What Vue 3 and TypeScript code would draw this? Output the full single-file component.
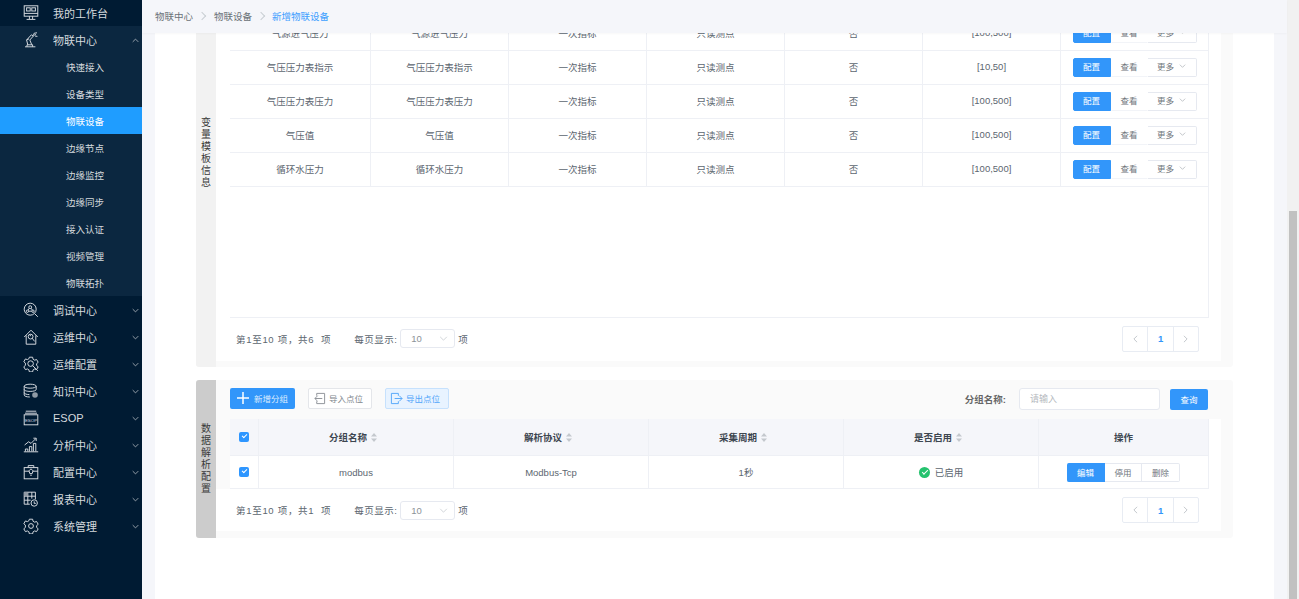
<script setup lang="ts">
const menuTop = ["快速接入", "设备类型", "物联设备", "边缘节点", "边缘监控", "边缘同步", "接入认证", "视频管理", "物联拓扑"];
const menuRest = [
  { name: "调试中心", icon: "debug" },
  { name: "运维中心", icon: "house" },
  { name: "运维配置", icon: "gearsearch" },
  { name: "知识中心", icon: "db" },
  { name: "ESOP", icon: "esop" },
  { name: "分析中心", icon: "chart" },
  { name: "配置中心", icon: "case" },
  { name: "报表中心", icon: "report" },
  { name: "系统管理", icon: "gear" },
];
const rows = [
  ["气源进气压力", "气源进气压力", "一次指标", "只读测点", "否", "[100,500]"],
  ["气压压力表指示", "气压压力表指示", "一次指标", "只读测点", "否", "[10,50]"],
  ["气压压力表压力", "气压压力表压力", "一次指标", "只读测点", "否", "[100,500]"],
  ["气压值", "气压值", "一次指标", "只读测点", "否", "[100,500]"],
  ["循环水压力", "循环水压力", "一次指标", "只读测点", "否", "[100,500]"],
];
const groupCols = ["分组名称", "解析协议", "采集周期", "是否启用"];
const varLabel = "变量模板信息".split("");
const dataLabel = "数据解析配置".split("");
const gearPath = "M8 1.500h4l.6 2.600 1.900 1.100 2.500-.8 2 3.500-2 1.700v2.200l2 1.700-2 3.500-2.500-.8-1.900 1.100-.6 2.600H8l-.6-2.600-1.900-1.100-2.500.8-2-3.500 2-1.700V8.900l-2-1.700 2-3.500 2.500.8 1.900-1.100z";
</script>

<template>
  <div class="page">
    <aside class="side">
      <div class="m-item home">
        <svg class="ico" viewBox="0 0 20 20"><rect x="1.500" y="1" width="17" height="13" /><rect x="4.500" y="3.500" width="4.500" height="4" /><rect x="11" y="3.500" width="4.500" height="4" /><path d="M1.500 10.500h17M8 14v3.500M12 14v3.500M4.500 18h11" /></svg>
        <span>我的工作台</span>
      </div>
      <div class="m-item open">
        <svg class="ico" viewBox="0 0 20 20"><path d="M2.500 18.500h13M5 18.500v-2.500h7v2.500M6 16L4.500 10l6-6.500 2.500 1.500-4.500 5 2.500 6M4.500 10l3-1.500M13 4.500l3-1.500M13 3.500l1-2 3.500-.5M15 5l3 .5" /></svg>
        <span>物联中心</span>
        <svg class="arrow" viewBox="0 0 10 6"><path d="M1 5l4-4 4 4" /></svg>
      </div>
      <div class="sub">
        <div v-for="(s, i) in menuTop" :key="s" class="s-item" :class="{ on: i === 2 }">{{ s }}</div>
      </div>
      <div v-for="m in menuRest" :key="m.name" class="m-item">
        <svg class="ico" viewBox="0 0 20 20">
          <template v-if="m.icon === 'debug'">
            <circle cx="9" cy="9" r="7.500" /><path d="M14.500 14.500l4 4" /><circle cx="9" cy="6.500" r="1.800" /><circle cx="5.500" cy="11.500" r="1.500" /><circle cx="12.500" cy="11.500" r="1.500" /><path d="M7.500 8l-1 2M10.500 8l1 2M7 11.500h4" />
          </template>
          <template v-else-if="m.icon === 'house'">
            <path d="M1.500 10L10 1.500l8.500 8.500M4 8v11h12V8" /><circle cx="9.500" cy="9.500" r="3" /><path d="M11.500 11.500l3 4M8.500 6.500l1 2.500" />
          </template>
          <template v-else-if="m.icon === 'gearsearch'">
            <path :d="gearPath" /><circle cx="9.500" cy="9.500" r="3.500" /><path d="M12 12l6.500 6.500" />
          </template>
          <template v-else-if="m.icon === 'db'">
            <ellipse cx="9" cy="4" rx="7.500" ry="2.500" /><path d="M1.500 4v11c0 1.500 3 2.500 7 2.500M1.500 8c0 1.500 3 2.500 7.500 2.500S16.500 9.500 16.500 8V4M1.500 12c0 1.500 3 2.500 6.500 2.500" /><circle class="fill" cx="15" cy="15" r="3.500" />
          </template>
          <template v-else-if="m.icon === 'esop'">
            <path d="M3.500 1.500h13M2.500 4h15" /><rect x="1.500" y="6" width="17" height="12.500" /><text x="10" y="14.500" class="ico-text">ESOP</text>
          </template>
          <template v-else-if="m.icon === 'chart'">
            <path d="M1 18.500h18M3 18v-3h3v3M8 18v-6h3v6M13 18V8h3v10M2 10l5-4 3 2 6-6M13 1.500h3.500V5" />
          </template>
          <template v-else-if="m.icon === 'case'">
            <rect x="1.500" y="4.500" width="17" height="14" /><path d="M6.500 4.500V2h7v2.500M1.500 9h6M12.500 9h6" /><path d="M10 6l2.500 2.500-1 3.500h-3l-1-3.500zM9 14h2" />
          </template>
          <template v-else-if="m.icon === 'report'">
            <path d="M1.500 1.500h14v9M1.500 1.500v15h7M1.500 6.500h14M1.500 11.500h8M6 1.500v15M11 1.500v8" /><rect class="fill" x="1.500" y="1.500" width="4.500" height="5" /><circle cx="14" cy="15" r="4" /><path d="M14 13v2.500h2" />
          </template>
          <template v-else>
            <path :d="gearPath" /><circle cx="10" cy="10" r="3" />
          </template>
        </svg>
        <span>{{ m.name }}</span>
        <svg class="arrow" viewBox="0 0 10 6"><path d="M1 1l4 4 4-4" /></svg>
      </div>
    </aside>

    <main class="main">
      <div class="crumbs">
        <span>物联中心</span><i class="sep"></i><span>物联设备</span><i class="sep"></i><span class="cur">新增物联设备</span>
      </div>
      <div class="sheet">
        <section class="block first">
          <div class="tag light"><span v-for="c in varLabel" :key="c">{{ c }}</span></div>
          <div class="body">
            <div class="table var">
              <div v-for="(r, i) in rows" :key="i" class="row">
                <div v-for="(c, j) in r" :key="j" class="cell">{{ c }}</div>
                <div class="cell">
                  <div class="btns">
                    <span class="b on">配置</span><span class="b view">查看</span>
                    <span class="b more">更多<svg viewBox="0 0 10 6"><path d="M1 1l4 4 4-4" /></svg></span>
                  </div>
                </div>
              </div>
            </div>
            <div class="pager">
              <span class="count">第1至10 项，共6&nbsp; 项</span>
              <span class="per">每页显示:</span>
              <span class="select">10<svg viewBox="0 0 10 6"><path d="M1 1l4 4 4-4" /></svg></span>
              <span class="per">项</span>
              <div class="pages">
                <span><svg viewBox="0 0 6 10"><path d="M5 1L1 5l4 4" /></svg></span><span class="cur">1</span><span><svg viewBox="0 0 6 10"><path d="M1 1l4 4-4 4" /></svg></span>
              </div>
            </div>
          </div>
        </section>

        <section class="block second">
          <div class="tag dark"><span v-for="c in dataLabel" :key="c">{{ c }}</span></div>
          <div class="body">
            <div class="tools">
              <span class="tb primary"><svg viewBox="0 0 12 12"><path d="M6 0v12M0 6h12" /></svg>新增分组</span>
              <span class="tb plain"><svg viewBox="0 0 14 14"><path d="M4 4V1.500h8.500v11H4V10M10 7H2M5 4L2 7l3 3" /></svg>导入点位</span>
              <span class="tb pale"><svg viewBox="0 0 14 14"><path d="M9 4V1.500H1.500v11H9V10M5 7h8M10 4l3 3-3 3" /></svg>导出点位</span>
              <label class="search-label">分组名称:</label>
              <span class="input">请输入</span>
              <span class="query">查询</span>
            </div>
            <div class="table group">
              <div class="row head">
                <div class="cell chk"><i class="box"></i></div>
                <div v-for="c in groupCols" :key="c" class="cell sortable">
                  {{ c }}<svg class="sort" viewBox="0 0 6 9"><path d="M3 0l3 3.500H0zM3 9L0 5.500h6z" /></svg>
                </div>
                <div class="cell">操作</div>
              </div>
              <div class="row">
                <div class="cell chk"><i class="box"></i></div>
                <div class="cell">modbus</div>
                <div class="cell">Modbus-Tcp</div>
                <div class="cell">1秒</div>
                <div class="cell enabled"><i class="dot"></i>已启用</div>
                <div class="cell">
                  <div class="btns small"><span class="b on">编辑</span><span class="b">停用</span><span class="b">删除</span></div>
                </div>
              </div>
            </div>
            <div class="pager short">
              <span class="count">第1至10 项，共1&nbsp; 项</span>
              <span class="per">每页显示:</span>
              <span class="select">10<svg viewBox="0 0 10 6"><path d="M1 1l4 4 4-4" /></svg></span>
              <span class="per">项</span>
              <div class="pages">
                <span><svg viewBox="0 0 6 10"><path d="M5 1L1 5l4 4" /></svg></span><span class="cur">1</span><span><svg viewBox="0 0 6 10"><path d="M1 1l4 4-4 4" /></svg></span>
              </div>
            </div>
          </div>
        </section>
      </div>
    </main>

    <div class="scrollbar"><div class="thumb"></div></div>
  </div>
</template>

<style scoped>
.page {
  display: flex;
  width: 1299px;
  height: 599px;
  overflow: hidden;
  background: #f5f6fa;
  font-family: "Liberation Sans", "Noto Sans CJK SC", sans-serif;
  font-size: 9.500px;
  color: #5c6670;
}

.side {
  width: 142px;
  flex: none;
  background: #001b33;
}
.m-item {
  display: flex;
  align-items: center;
  height: 27px;
  padding-left: 23px;
  font-size: 11px;
  color: #d5dade;
}
.m-item.home {
  height: 26px;
}
.m-item.open {
  background: #0b2740;
}
.ico {
  width: 16px;
  height: 16px;
  margin-right: 14px;
  flex: none;
  fill: none;
  stroke: #d8dde2;
  stroke-width: 1.200;
}
.ico .fill {
  fill: #8f9aa5;
  stroke: none;
}
.ico-text {
  font-size: 5.500px;
  fill: #d8dde2;
  stroke: none;
  text-anchor: middle;
}
.arrow {
  width: 7px;
  height: 5px;
  margin-left: auto;
  margin-right: 3px;
  margin-top: 1px;
  fill: none;
  stroke: #aeb6bd;
  stroke-width: 1.200;
}
.sub {
  background: #0b2740;
}
.s-item {
  height: 27px;
  line-height: 29px;
  padding-left: 66px;
  color: #d5dade;
}
.s-item.on {
  background: #1f9dff;
  color: #fff;
}

.main {
  position: relative;
  flex: 1;
  min-width: 0;
  padding-left: 13px;
}
/* breadcrumb bar stays fixed over the scrolled sheet */
.crumbs {
  position: absolute;
  z-index: 2;
  top: 0;
  left: 0;
  right: 0;
  display: flex;
  align-items: center;
  height: 33px;
  padding: 0 0 2px 13px;
  box-sizing: border-box;
  background: #f5f6fa;
  box-shadow: 0 1px 2px rgba(0, 0, 0, 0.03);
  color: #6b7278;
}
.crumbs .cur {
  margin-left: -1px;
  color: #40a0ff;
}
.sep {
  width: 5px;
  height: 5px;
  margin: 0 9.500px 0 5.500px;
  border-top: 1px solid #c9ced3;
  border-right: 1px solid #c9ced3;
  transform: rotate(45deg);
}
.sheet {
  display: flex;
  flex-direction: column;
  width: 1119px;
  height: 599px;
  padding: 0 41px;
  box-sizing: border-box;
  background: #fff;
}

.block {
  display: flex;
  flex: none;
  width: 1037px;
  background: #fafafa;
  border-radius: 3px;
  overflow: hidden;
}
/* page is scrolled down, so the first block starts above the viewport */
.block.first {
  height: 428px;
  margin-top: -61px;
  margin-bottom: 13px;
}
.block.second .body {
  padding-bottom: 7px;
}
.tag {
  display: flex;
  flex-direction: column;
  align-items: center;
  justify-content: center;
  width: 20px;
  flex: none;
  font-size: 10px;
  line-height: 12px;
  color: #3a3a3a;
}
.tag.light {
  background: #f2f2f2;
}
.tag.dark {
  background: #cccccc;
}
.body {
  display: flex;
  flex-direction: column;
  flex: 1;
  min-width: 0;
}

.table {
  width: 979px;
  margin-left: 14px;
}
.row {
  display: grid;
  height: 34px;
  border-bottom: 1px solid #eef0f5;
  box-sizing: border-box;
}
.cell {
  display: flex;
  align-items: center;
  justify-content: center;
  border-right: 1px solid #eef0f5;
}
.table.var {
  height: 300px;
  padding-top: 78px;
  background: #fff;
  border-bottom: 1px solid #eef0f5;
  border-right: 1px solid #eef0f5;
  box-sizing: content-box;
  box-shadow: 12px 0 0 #fff, -14px 0 0 #fff;
  width: 978px;
}
.table.var .row {
  grid-template-columns: 141px 138px 138px 138px 138px 138px 147px;
}
.table.var .cell {
  padding-bottom: 2px;
}
.table.var .cell:last-child {
  border-right: none;
}
.table.var .btns {
  margin-bottom: -2px;
}
.table.var .b {
  padding-bottom: 3px;
}
.table.group .row {
  grid-template-columns: 29px 195px 195px 195px 195px 170px;
  height: 33px;
}
.table.group {
  box-shadow: 12px 0 0 #fff;
}
.table.group .row {
  background: #fff;
}
.table.group .row.head {
  height: 37px;
  background: #f5f6fa;
  color: #3d4650;
  font-weight: 700;
}
.sortable {
  padding-right: 6px;
  box-sizing: border-box;
}
.chk {
  border-right: 1px solid #eef0f5;
}
.box {
  position: relative;
  width: 10px;
  height: 10px;
  border-radius: 2px;
  background: #2e96ff;
}
.box::after {
  content: "";
  position: absolute;
  left: 3px;
  top: 2px;
  width: 4px;
  height: 2px;
  border-left: 1px solid #fff;
  border-bottom: 1px solid #fff;
  transform: rotate(-45deg);
}
.sort {
  width: 6px;
  height: 9px;
  margin-left: 4px;
  fill: #c4c8cd;
}

.btns {
  display: flex;
  height: 19px;
  font-size: 8.500px;
}
.b {
  display: flex;
  align-items: center;
  justify-content: center;
  width: 37px;
  box-sizing: border-box;
  background: #fff;
  color: #70767c;
  border: 1px solid #fff;
}
.b.view {
  border-bottom-color: #f2f4f8;
}
.b.on {
  width: 38px;
  background: #3296fa;
  border-color: #3296fa;
  color: #fff;
  border-radius: 2px 0 0 2px;
}
.b.more {
  width: 49px;
  gap: 5px;
  border: 1px solid #e6e9f0;
  border-left: none;
  border-radius: 0 2px 2px 0;
}
.b.more svg {
  width: 7px;
  height: 4px;
  fill: none;
  stroke: #a5abb1;
}
.btns.small .b {
  border-color: #e6e9f0;
  border-left: none;
}
.btns.small .b.on {
  border-color: #3296fa;
}
.btns.small .b:nth-child(2) {
  border-right: 1px solid #e6e9f0;
}
.btns.small .b:last-child {
  width: 38px;
  border-radius: 0 2px 2px 0;
}

.pager {
  display: flex;
  align-items: center;
  height: 43px;
  padding: 0 22px 2px 20px;
  width: 1005px;
  box-sizing: border-box;
  background: #fff;
  color: #5c6670;
}
.pager.short {
  height: 42px;
  padding-bottom: 0;
}
.count {
  margin-right: 23px;
  letter-spacing: 0.7px;
}
.per {
  white-space: nowrap;
  letter-spacing: 0.5px;
}
.select {
  display: flex;
  align-items: center;
  justify-content: space-between;
  width: 55px;
  height: 19px;
  box-sizing: border-box;
  margin: 0 3px 0 3px;
  padding: 0 6px 0 10px;
  border: 1px solid #e6e9f0;
  border-radius: 3px;
  color: #8c9298;
  background: #fff;
}
.select svg {
  width: 9px;
  height: 5px;
  fill: none;
  stroke: #c8ccd1;
}
.pages {
  display: flex;
  margin-left: auto;
  border: 1px solid #e8ecf3;
  border-radius: 2px;
}
.pages span {
  display: flex;
  align-items: center;
  justify-content: center;
  width: 24.300px;
  height: 24px;
}
.pages span + span {
  border-left: 1px solid #e8ecf3;
}
.pages .cur {
  color: #3296fa;
  font-weight: 700;
}
.pages svg {
  width: 5px;
  height: 8px;
  fill: none;
  stroke: #b5bac0;
}

.tools {
  display: flex;
  align-items: center;
  height: 39px;
  padding: 0 25px 0 14px;
  font-size: 8.500px;
}
.tb {
  display: flex;
  align-items: center;
  height: 21px;
  box-sizing: border-box;
  border-radius: 2px;
  margin-right: 13px;
  margin-top: -3px;
}
.tb svg {
  fill: none;
}
.tb.primary {
  justify-content: center;
  width: 65px;
  background: #3296fa;
  color: #dcecff;
}
.tb.primary svg {
  width: 12px;
  height: 12px;
  margin-right: 5px;
  stroke: #fff;
  stroke-width: 1.500;
}
.tb.plain {
  width: 64px;
  padding-left: 4px;
  background: #fff;
  border: 1px solid #e4e6ea;
  color: #80868c;
}
.tb.plain svg {
  width: 13px;
  height: 13px;
  margin-right: 3px;
  stroke: #8b9096;
}
.tb.pale {
  width: 64px;
  padding-left: 4px;
  background: #e8f3ff;
  border: 1px solid #c6e1fd;
  color: #50a5fa;
}
.tb.pale svg {
  width: 13px;
  height: 13px;
  margin-right: 3px;
  stroke: #50a5fa;
}
.search-label {
  margin-left: auto;
  margin-right: 13px;
  margin-top: -1px;
  font-size: 9.500px;
  font-weight: 700;
  color: #666;
}
.input {
  display: flex;
  align-items: center;
  width: 141px;
  height: 22px;
  box-sizing: border-box;
  padding: 0 0 1px 10px;
  margin-top: -1px;
  background: #fff;
  border: 1px solid #e6e9f0;
  border-radius: 3px;
  color: #b5b9be;
  font-size: 9px;
}
.query {
  display: flex;
  align-items: center;
  justify-content: center;
  width: 38px;
  height: 21px;
  margin-left: 10px;
  margin-top: -1px;
  padding-bottom: 1px;
  box-sizing: border-box;
  background: #3296fa;
  border-radius: 2px;
  color: #fff;
}
.enabled {
  gap: 5px;
}
.dot {
  position: relative;
  width: 11px;
  height: 11px;
  border-radius: 50%;
  background: #25c26e;
}
.dot::after {
  content: "";
  position: absolute;
  left: 3px;
  top: 3px;
  width: 5px;
  height: 2px;
  border-left: 1.500px solid #fff;
  border-bottom: 1.500px solid #fff;
  transform: rotate(-45deg);
}

.scrollbar {
  width: 12px;
  flex: none;
  background: #f1f1f1;
  padding-top: 211px;
  box-sizing: border-box;
}
.thumb {
  width: 8px;
  height: 388px;
  margin-left: 2px;
  background: #c1c1c1;
}
</style>
